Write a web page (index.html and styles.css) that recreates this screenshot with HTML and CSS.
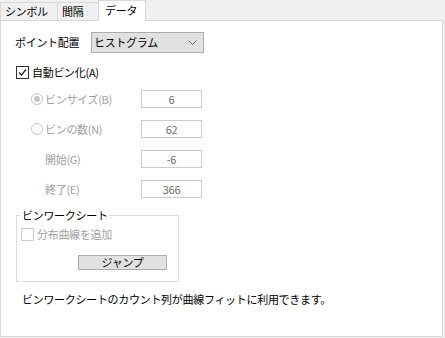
FILE: index.html
```html
<!DOCTYPE html>
<html lang="ja">
<head>
<meta charset="utf-8">
<link rel="stylesheet" href="styles.css">
</head>
<body>
<div class="dialog">
  <div class="tabs">
    <div class="tab t1">シンボル</div>
    <div class="tab t2">間隔</div>
    <div class="tab t3 active">データ</div>
  </div>
  <div class="panel">
    <div class="row placement">
      <span class="plabel">ポイント配置</span>
      <div class="select">
        <span>ヒストグラム</span>
        <svg class="chev" width="9" height="6" viewBox="0 0 9 6"><path d="M0.5 0.5 L4.5 4.5 L8.5 0.5" fill="none" stroke="#6a6a6a" stroke-width="1"/></svg>
      </div>
    </div>
    <div class="row check-row auto">
      <span class="cbox checked">
        <svg width="11" height="11" viewBox="0 0 11 11"><path d="M2 5.5 L4.5 8 L9 2.5" fill="none" stroke="#222" stroke-width="1.3"/></svg>
      </span>
      <span>自動ビン化(A)</span>
    </div>
    <div class="field">
      <span class="radio on"></span><span class="flabel">ビンサイズ(B)</span>
      <span class="num">6</span>
    </div>
    <div class="field">
      <span class="radio"></span><span class="flabel">ビンの数(N)</span>
      <span class="num">62</span>
    </div>
    <div class="field">
      <span class="noradio"></span><span class="flabel">開始(G)</span>
      <span class="num">-6</span>
    </div>
    <div class="field">
      <span class="noradio"></span><span class="flabel">終了(E)</span>
      <span class="num">366</span>
    </div>
    <fieldset class="group">
      <legend>ビンワークシート</legend>
      <div class="check-row dist">
        <span class="cbox disabled"></span>
        <span class="gray">分布曲線を追加</span>
      </div>
      <div class="btnrow"><span class="button">ジャンプ</span></div>
    </fieldset>
    <p class="note">ビンワークシートのカウント列が曲線フィットに利用できます。</p>
  </div>
</div>
</body>
</html>
```
FILE: styles.css
```css
html, body {
  margin: 0;
  padding: 0;
  background: #f0f0f0;
}
body {
  width: 445px;
  height: 338px;
  overflow: hidden;
  font-family: "Noto Sans CJK JP", "Noto Sans", sans-serif;
  font-size: 11px;
  line-height: 13px;
  letter-spacing: -0.3px;
  color: #000;
}
.dialog {
  display: flex;
  flex-direction: column;
}
.tabs {
  display: flex;
  align-items: flex-end;
  height: 20px;
}
.tab {
  box-sizing: border-box;
  height: 18px;
  border: 1px solid #d9d9d9;
  border-bottom: none;
  background: #f0f0f0;
  display: flex;
  align-items: center;
  padding-left: 4px;
}
.t1 { width: 58px; }
.t2 { width: 42px; margin-left: -1px; }
.t3 { width: 48px; margin-left: -1px; }
.tab.active {
  height: 21px;
  margin-bottom: -1px;
  background: #fff;
  position: relative;
  z-index: 1;
  padding-left: 6px;
  align-items: flex-start;
  padding-top: 3px;
}
.panel {
  box-sizing: border-box;
  width: 443px;
  height: 317px;
  background: #fff;
  border: 1px solid #d9d9d9;
  padding: 0 0 0 14px;
  display: flex;
  flex-direction: column;
}
.row {
  display: flex;
  align-items: center;
}
.placement {
  margin-top: 11px;
  height: 21px;
}
.plabel {
  width: 76px;
}
.select {
  box-sizing: border-box;
  width: 113px;
  height: 21px;
  background: #e1e1e1;
  border: 1px solid #adadad;
  display: flex;
  align-items: center;
  justify-content: space-between;
  padding: 0 6px 0 2px;
}
.chev { display: block; }
.check-row {
  display: flex;
  align-items: center;
  gap: 3px;
}
.auto {
  margin-top: 13px;
  height: 13px;
  margin-left: 1px;
}
.cbox {
  box-sizing: border-box;
  width: 13px;
  height: 13px;
  border: 1px solid #333;
  background: #fff;
  display: flex;
  align-items: center;
  justify-content: center;
}
.cbox.disabled {
  border-color: #cccccc;
}
.field {
  display: grid;
  grid-template-columns: 12px 98px 61px;
  column-gap: 0;
  align-items: center;
  height: 18px;
  margin-top: 12px;
  margin-left: 16px;
  color: #a0a0a0;
}
.field:first-of-type { margin-top: 11px; }
.auto + .field { margin-top: 11px; }
.radio {
  box-sizing: border-box;
  width: 12px;
  height: 12px;
  border: 1px solid #c4c4c4;
  border-radius: 50%;
  background: #fff;
  display: flex;
  align-items: center;
  justify-content: center;
}
.radio.on::after {
  content: "";
  width: 6px;
  height: 6px;
  border-radius: 50%;
  background: #c4c4c4;
}
.flabel {
  padding-left: 2px;
}
.num {
  box-sizing: border-box;
  height: 18px;
  border: 1px solid #cccccc;
  background: #fff;
  color: #6d6d6d;
  display: flex;
  align-items: center;
  justify-content: center;
}
.group {
  box-sizing: border-box;
  margin: 11px 0 0 1px;
  width: 163px;
  height: 73px;
  border: 1px solid #dcdcdc;
  padding: 0 0 0 4px;
  min-width: 0;
}
.group legend {
  padding: 0 1px;
  line-height: 13px;
}
.dist {
  margin-top: 6px;
  height: 13px;
}
.gray { color: #a0a0a0; }
.btnrow {
  display: flex;
  margin-top: 14px;
  padding-left: 57px;
}
.button {
  box-sizing: border-box;
  width: 89px;
  height: 15px;
  background: #e1e1e1;
  border: 1px solid #adadad;
  display: flex;
  align-items: center;
  justify-content: center;
}
.note {
  margin: 11px 0 0 7px;
}
```
